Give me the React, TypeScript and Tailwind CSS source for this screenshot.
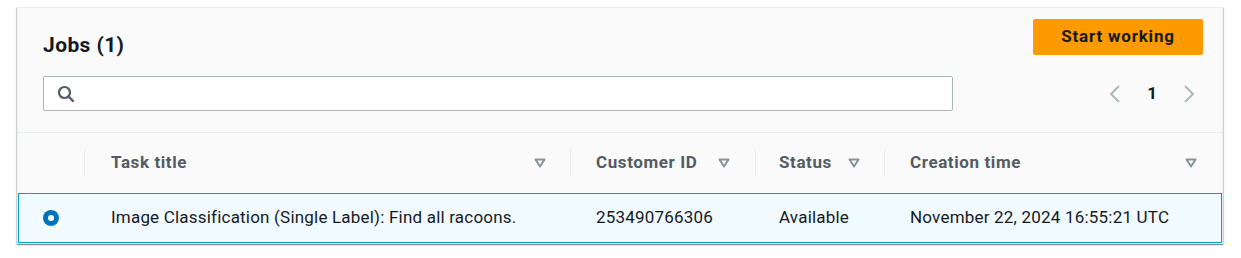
import React from "react";

const font = { fontFamily: "Roboto, 'Liberation Sans', sans-serif" };

function SortIcon() {
  return (
    <svg width="12" height="10" viewBox="0 0 12 10" className="shrink-0">
      <path d="M1.5 1.5 H10.5 L6 8.5 Z" fill="none" stroke="#879596" strokeWidth="2" strokeLinejoin="round" />
    </svg>
  );
}

function Divider() {
  return <div className="w-px h-[28px] bg-[#eaeded]" />;
}

export default function App() {
  return (
    <div className="w-[1241px] h-[258px] bg-white pt-[7px] pl-[17px]" style={font}>
      <div className="w-[1206px] bg-[#fafafa] border border-[#eaeded] shadow-[0_1px_1px_0_rgba(0,28,36,0.3),1px_1px_1px_0_rgba(0,28,36,0.15),-1px_1px_1px_0_rgba(0,28,36,0.15)]">
        {/* header */}
        <div className="h-[125px] border-b border-[#eaeded] pl-[25px] pr-[19px] flex flex-col">
          <div className="flex justify-between items-start">
            <h2 className="pt-[24px] text-[21px] leading-[26px] font-bold tracking-[0.4px] text-[#16191f]">Jobs (1)</h2>
            <button className="mt-[11px] w-[170px] h-[36px] rounded-[2px] bg-[#ff9900] text-[#16191f] font-bold text-[17px] tracking-[0.8px]">
              Start working
            </button>
          </div>
          <div className="flex items-center justify-between mt-[18px]">
            <div className="w-[910px] h-[35px] bg-white border border-[#aab7b8] rounded-[2px] flex items-center pl-[13px]">
              <svg width="18" height="18" viewBox="0 0 18 18">
                <circle cx="7.5" cy="7.5" r="5.5" fill="none" stroke="#545b64" strokeWidth="2.2" />
                <path d="M11.5 11.5 L16 16" stroke="#545b64" strokeWidth="2.4" strokeLinecap="round" />
              </svg>
            </div>
            <div className="flex items-center gap-[26px] pr-[8px]">
              <svg width="12" height="20" viewBox="0 0 12 20">
                <path d="M10 2 L2 10 L10 18" fill="none" stroke="#aab7b8" strokeWidth="2" />
              </svg>
              <span className="text-[17px] font-bold text-[#16191f]">1</span>
              <svg width="12" height="20" viewBox="0 0 12 20">
                <path d="M2 2 L10 10 L2 18" fill="none" stroke="#aab7b8" strokeWidth="2" />
              </svg>
            </div>
          </div>
        </div>
        {/* table header */}
        <div className="flex h-[60px] items-center text-[17px] font-bold tracking-[0.6px] text-[#545b64]">
          <div className="w-[67px] flex justify-end"><Divider /></div>
          <div className="w-[485px] flex items-center pl-[26px] pr-[24px] justify-between">
            <span>Task title</span>
            <SortIcon />
          </div>
          <Divider />
          <div className="w-[184px] flex items-center pl-[25px] pr-[25px] justify-between">
            <span>Customer ID</span>
            <SortIcon />
          </div>
          <Divider />
          <div className="w-[128px] flex items-center pl-[23px] pr-[24px] justify-between">
            <span>Status</span>
            <SortIcon />
          </div>
          <Divider />
          <div className="flex-1 flex items-center pl-[25px] pr-[25px] justify-between">
            <span>Creation time</span>
            <SortIcon />
          </div>
        </div>
        {/* row */}
        <div className="flex h-[50px] items-center bg-[#f1faff] border border-[#00a1c9] text-[17px] tracking-[0.2px] text-[#16191f]">
          <div className="w-[66px] flex pl-[24px]">
            <div className="w-[16px] h-[16px] rounded-full bg-[#0073bb] flex items-center justify-center">
              <div className="w-[6px] h-[6px] rounded-full bg-white" />
            </div>
          </div>
          <div className="w-[486px] pl-[26px]">Image Classification (Single Label): Find all racoons.</div>
          <div className="w-[185px] pl-[25px]">253490766306</div>
          <div className="w-[129px] pl-[23px]">Available</div>
          <div className="flex-1 pl-[25px]">November 22, 2024 16:55:21 UTC</div>
        </div>
      </div>
    </div>
  );
}
